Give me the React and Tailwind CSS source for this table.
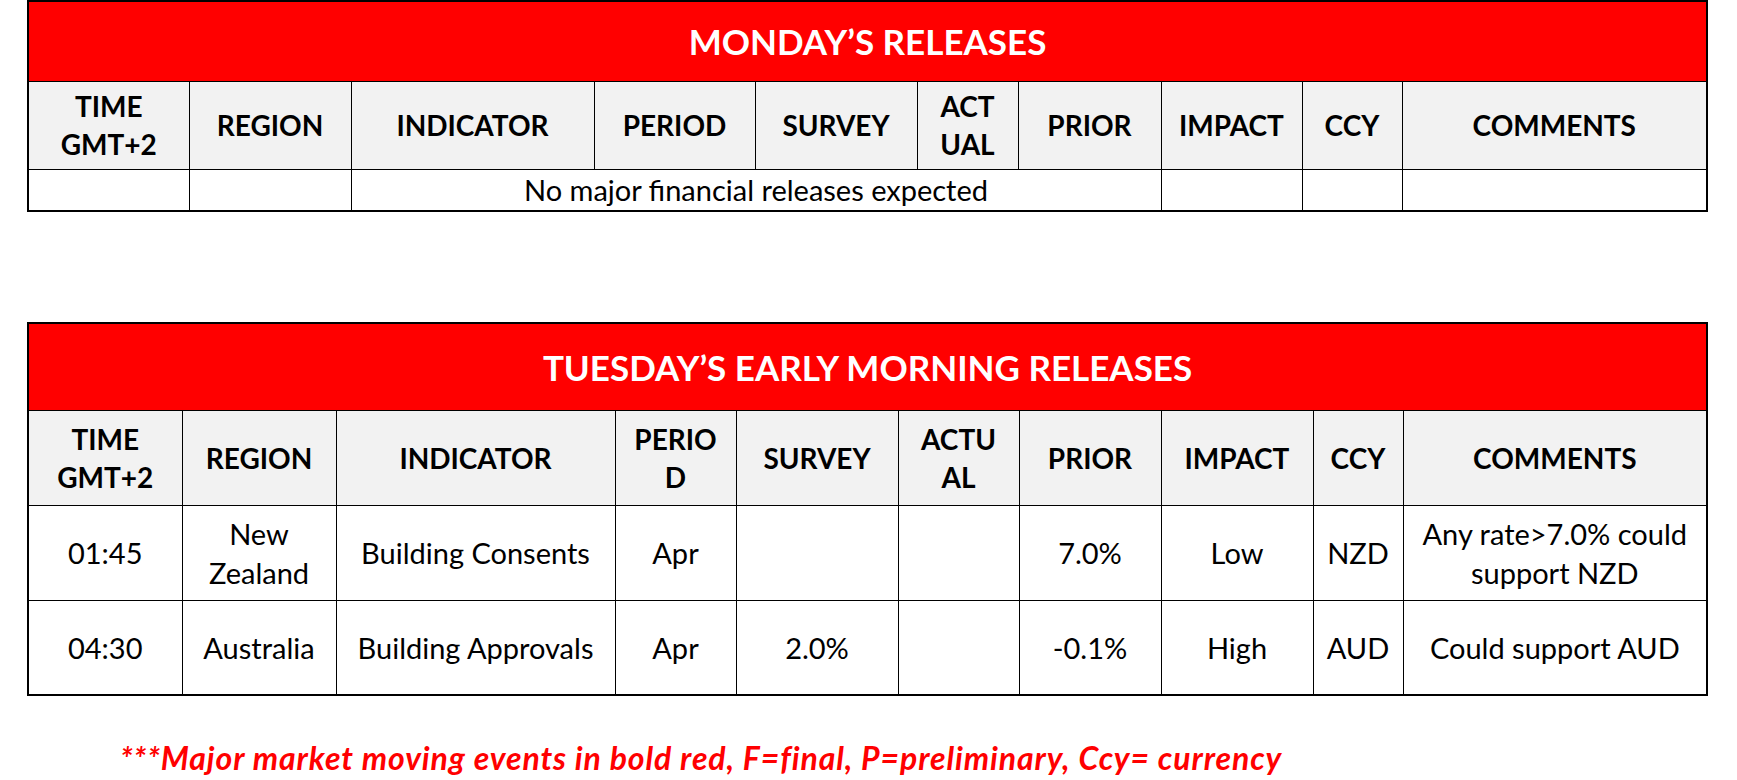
import React from "react";

const font = { fontFamily: "Lato, 'Open Sans', sans-serif" };

function Title({ text, cols, h }) {
  return (
    <tr className={h}>
      <td
        colSpan={cols}
        className="bg-[#ff0000] text-white text-center font-bold text-[35px] border border-black"
      >
        {text}
      </td>
    </tr>
  );
}

function Th({ children }) {
  return (
    <td className="bg-[#f2f2f2] border border-black text-center align-middle font-bold text-[28px] leading-[38px] text-black px-1">
      {children}
    </td>
  );
}

function Td({ children, colSpan }) {
  return (
    <td
      colSpan={colSpan}
      className="bg-white border border-black text-center align-middle text-[29px] leading-[39px] text-black px-1"
    >
      {children}
    </td>
  );
}

export default function App() {
  return (
    <div className="w-[1737px] h-[780px] bg-white overflow-hidden" style={font}>
      <div className="pl-[27px]">
        <table className="table-fixed border-collapse border-2 border-black w-[1679px]">
          <colgroup>
            <col className="w-[161px]" />
            <col className="w-[162px]" />
            <col className="w-[243px]" />
            <col className="w-[161px]" />
            <col className="w-[162px]" />
            <col className="w-[101px]" />
            <col className="w-[143px]" />
            <col className="w-[141px]" />
            <col className="w-[100px]" />
            <col className="w-[305px]" />
          </colgroup>
          <tbody>
            <Title text="MONDAY’S RELEASES" cols={10} h="h-[80px]" />
            <tr className="h-[88px]">
              <Th>
                TIME
                <br />
                GMT+2
              </Th>
              <Th>REGION</Th>
              <Th>INDICATOR</Th>
              <Th>PERIOD</Th>
              <Th>SURVEY</Th>
              <Th>
                ACT
                <br />
                UAL
              </Th>
              <Th>PRIOR</Th>
              <Th>IMPACT</Th>
              <Th>CCY</Th>
              <Th>COMMENTS</Th>
            </tr>
            <tr className="h-[42px]">
              <Td />
              <Td />
              <Td colSpan={5}>No major financial releases expected</Td>
              <Td />
              <Td />
              <Td />
            </tr>
          </tbody>
        </table>

        <table className="mt-[110px] table-fixed border-collapse border-2 border-black w-[1679px]">
          <colgroup>
            <col className="w-[154px]" />
            <col className="w-[154px]" />
            <col className="w-[279px]" />
            <col className="w-[121px]" />
            <col className="w-[162px]" />
            <col className="w-[121px]" />
            <col className="w-[142px]" />
            <col className="w-[152px]" />
            <col className="w-[90px]" />
            <col className="w-[304px]" />
          </colgroup>
          <tbody>
            <Title text="TUESDAY’S EARLY MORNING RELEASES" cols={10} h="h-[87px]" />
            <tr className="h-[95px]">
              <Th>
                TIME
                <br />
                GMT+2
              </Th>
              <Th>REGION</Th>
              <Th>INDICATOR</Th>
              <Th>
                PERIO
                <br />
                D
              </Th>
              <Th>SURVEY</Th>
              <Th>
                ACTU
                <br />
                AL
              </Th>
              <Th>PRIOR</Th>
              <Th>IMPACT</Th>
              <Th>CCY</Th>
              <Th>COMMENTS</Th>
            </tr>
            <tr className="h-[95px]">
              <Td>01:45</Td>
              <Td>
                New
                <br />
                Zealand
              </Td>
              <Td>Building Consents</Td>
              <Td>Apr</Td>
              <Td />
              <Td />
              <Td>7.0%</Td>
              <Td>Low</Td>
              <Td>NZD</Td>
              <Td>
                Any rate&gt;7.0% could
                <br />
                support NZD
              </Td>
            </tr>
            <tr className="h-[95px]">
              <Td>04:30</Td>
              <Td>Australia</Td>
              <Td>Building Approvals</Td>
              <Td>Apr</Td>
              <Td>2.0%</Td>
              <Td />
              <Td>-0.1%</Td>
              <Td>High</Td>
              <Td>AUD</Td>
              <Td>Could support AUD</Td>
            </tr>
          </tbody>
        </table>

        <div className="mt-[44px] pl-[93px] text-[#ff0000] font-bold italic text-[32px] tracking-[0.9px] leading-[36px] whitespace-nowrap">
          ***Major market moving events in bold red, F=final, P=preliminary, Ccy= currency
        </div>
      </div>
    </div>
  );
}
